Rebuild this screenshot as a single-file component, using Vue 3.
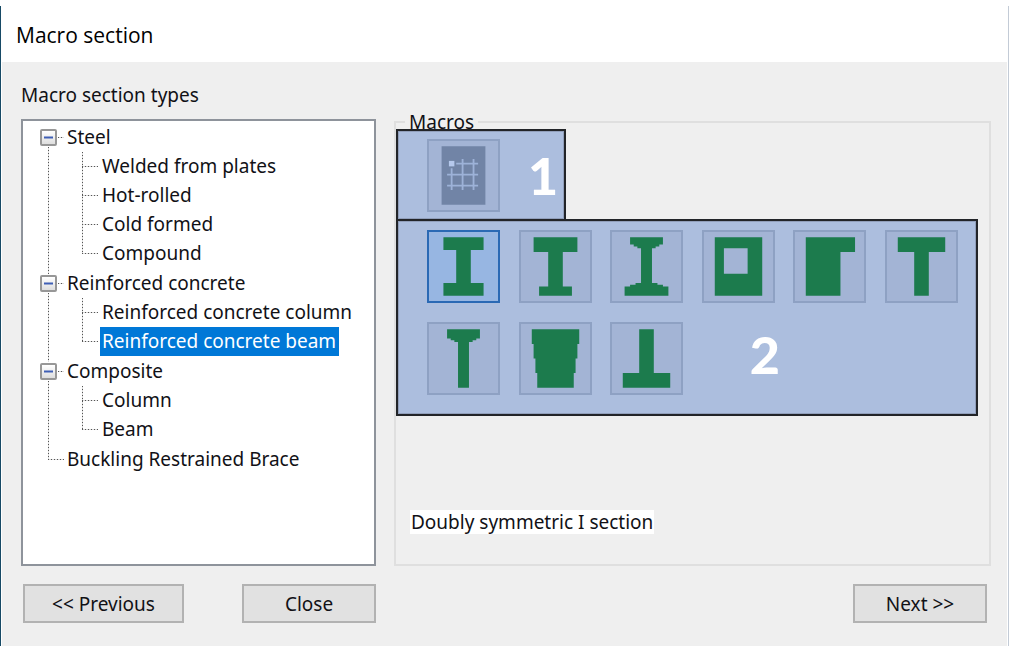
<script setup>
import { ref } from 'vue'

const groups = ref([
  { name: 'Steel', open: true, items: ['Welded from plates', 'Hot-rolled', 'Cold formed', 'Compound'] },
  { name: 'Reinforced concrete', open: true, items: ['Reinforced concrete column', 'Reinforced concrete beam'] },
  { name: 'Composite', open: true, items: ['Column', 'Beam'] },
  { name: 'Buckling Restrained Brace', open: false, items: [] },
])
const selectedType = ref('Reinforced concrete beam')

const macros = [
  { name: 'Doubly symmetric I section', d: 'M9 4H31V11H24V29H31V36H9V29H16V11H9Z' },
  { name: 'Asymmetric I section', d: 'M8 4H32V12H24V31H29V36H11V31H16V12H8Z' },
  { name: 'Tapered flange I section', d: 'M11 4H29V8H27V9H25V10H23V29H26V30H29V31H32V36H8V31H11V30H14V29H17V10H15V9H13V8H11Z' },
  { name: 'Hollow rectangular section', d: 'M7 4H33V36H7ZM12 10V24H25V10Z' },
  { name: 'L section', d: 'M7 4H34V12H26V36H7Z' },
  { name: 'T section', d: 'M7 4H33V12H24V36H16V12H7Z' },
  { name: 'Tapered flange T section', d: 'M11 4H29V9H27V10H25V11H23V36H17V11H15V10H13V9H11Z' },
  { name: 'Trapezoid section', d: 'M7 4H33V12H32V20H31V28H30V36H10V28H9V20H8V12H7Z' },
  { name: 'Inverted T section', d: 'M16 4H24V28H33V36H7V28H16Z' },
]
const selectedMacro = ref(macros[0].name)
</script>

<template>
  <div class="page">
    <main class="window">
      <header class="titlebar"><h1>Macro section</h1></header>
      <div class="body">
        <h2 id="types-label">Macro section types</h2>
        <div class="panels">
          <ul class="tree" role="tree" aria-labelledby="types-label">
            <li v-for="g in groups" :key="g.name" class="group" role="treeitem">
              <div class="row">
                <button v-if="g.items.length" type="button" class="expander" :aria-label="'Toggle ' + g.name" @click="g.open = !g.open">
                  <svg viewBox="0 0 13 13"><path d="M2 6.5H11" /><path v-if="!g.open" d="M6.5 2V11" /></svg>
                </button>
                <span v-else class="expander-gap"></span>
                <span class="label">{{ g.name }}</span>
              </div>
              <ul v-if="g.open" class="children" role="group">
                <li v-for="item in g.items" :key="item" class="child" role="treeitem" :aria-selected="item === selectedType">
                  <button type="button" class="label" :class="{ selected: item === selectedType }" @click="selectedType = item">{{ item }}</button>
                </li>
              </ul>
            </li>
          </ul>

          <section class="macros" aria-labelledby="macros-label">
            <h3 id="macros-label">Macros</h3>
            <div class="callout first">
              <button type="button" class="tile" aria-label="General section">
                <svg viewBox="0 0 40 40">
                  <path class="sheet" d="M8 4H32V36H8Z" />
                  <path class="mesh" d="M16 13.5H28M11 19.5H28M11 25.5H28M13.5 16V28M19.5 11V28M25.5 11V28" />
                  <path class="node" d="M12 12H15V15H12Z" />
                </svg>
              </button>
              <span class="digit">1</span>
            </div>
            <div class="callout second">
              <button
                v-for="m in macros"
                :key="m.name"
                type="button"
                class="tile"
                :class="{ active: m.name === selectedMacro }"
                :aria-label="m.name"
                @click="selectedMacro = m.name"
              >
                <svg viewBox="0 0 40 40"><path class="shape" fill-rule="evenodd" :d="m.d" /></svg>
              </button>
              <span class="digit">2</span>
            </div>
            <p class="description"><span>{{ selectedMacro }}</span></p>
          </section>
        </div>

        <footer class="actions">
          <button type="button" class="push wide">&lt;&lt; Previous</button>
          <button type="button" class="push close">Close</button>
          <button type="button" class="push next">Next &gt;&gt;</button>
        </footer>
      </div>
    </main>
  </div>
</template>

<style>
body {
  margin: 0;
  background: #fff;
}
</style>

<style scoped>
* {
  box-sizing: border-box;
}
button {
  font: inherit;
  color: inherit;
  margin: 0;
}
ul {
  list-style: none;
  margin: 0;
  padding: 0;
}
.page {
  min-height: 100vh;
  padding: 6px 0 2px;
  display: flex;
  flex-direction: column;
  font-family: "Noto Sans", "Open Sans", sans-serif;
  font-size: 19px;
  color: #111116;
}
.window {
  flex: 1;
  display: flex;
  flex-direction: column;
  border-left: 1px solid #174a66;
  border-right: 1px solid #c3cbd6;
}
.titlebar {
  height: 56px;
  padding: 2px 15px 0;
  display: flex;
  align-items: center;
}
h1 {
  margin: 0;
  font-family: "Open Sans", "Noto Sans", sans-serif;
  font-size: 21px;
  font-weight: 400;
  color: #000;
}
.body {
  flex: 1;
  display: flex;
  flex-direction: column;
  margin: 0 1px;
  padding: 20px 16px 23px 19px;
  background: #efefef;
}
h2 {
  margin: 0;
  height: 37px;
  font-size: 19px;
  line-height: 26px;
  font-weight: 400;
}
.panels {
  flex: 1;
  display: grid;
  grid-template-columns: 355px 1fr;
  gap: 18px;
}
.tree {
  padding: 2px 0 0 16px;
  background: #fff;
  border: 2px solid #8e939b;
}
.group {
  position: relative;
  margin-bottom: 1px;
}
.group::before,
.children::before {
  content: "";
  position: absolute;
  width: 1px;
  background: repeating-linear-gradient(to bottom, #555 0 1px, #ddd 1px 3px);
}
.group::before {
  left: 9px;
  top: 24px;
  bottom: -6px;
}
.group:last-child::before {
  top: 5px;
  bottom: auto;
  height: 10px;
}
.row {
  display: flex;
  align-items: center;
  height: 29px;
}
.row::before {
  content: "";
  position: absolute;
  left: 19px;
  width: 6px;
  height: 1px;
  background: repeating-linear-gradient(to right, #555 0 1px, #ddd 1px 3px);
}
.group:last-child .row::before {
  left: 9px;
  width: 16px;
}
.expander,
.expander-gap {
  width: 17px;
  height: 17px;
  margin: 0 8px 0 1px;
}
.expander {
  position: relative;
  padding: 0;
  border: 2px solid #979797;
  border-radius: 2px;
  background: linear-gradient(#fff, #dedede);
  display: flex;
}
.expander svg {
  width: 100%;
  height: 100%;
}
.expander path {
  stroke: #3f5fb5;
  stroke-width: 2;
}
.label {
  display: block;
  height: 29px;
  padding: 0 3px 0 2px;
  border: 0;
  background: none;
  line-height: 29px;
  white-space: nowrap;
}
.label.selected {
  background: #0078d7;
  color: #fff;
}
.children {
  position: relative;
  padding-left: 61px;
}
.children::before {
  left: 43px;
  top: 0;
  bottom: 14px;
}
.child {
  position: relative;
}
.child::before {
  content: "";
  position: absolute;
  left: -18px;
  top: 14px;
  width: 16px;
  height: 1px;
  background: repeating-linear-gradient(to right, #555 0 1px, #ddd 1px 3px);
}
.macros {
  margin-top: 2px;
  border: 2px solid #dfdfdf;
  display: flex;
  flex-direction: column;
  align-items: flex-start;
}
h3 {
  margin: -14px 0 -6px 9px;
  padding: 0 4px;
  font-size: 19px;
  line-height: 26px;
  font-weight: 400;
  background: #efefef;
}
.callout {
  position: relative;
  border: 2px solid #222428;
  background: #acbede;
  box-shadow: inset 0 0 0 1px #919fbb;
}
.first {
  display: flex;
  align-items: center;
  width: 170px;
  height: 92px;
  padding-left: 29px;
}
.second {
  align-self: stretch;
  margin: -2px 11px 0 0;
  padding: 9px 18px 19px 29px;
  display: grid;
  grid-template-columns: repeat(6, 73px);
  justify-content: space-between;
  row-gap: 19px;
}
.tile {
  width: 73px;
  height: 73px;
  padding: 0;
  border: 2px solid #8ea1c3;
  background: #a3b4d5;
}
.tile.active {
  border-color: #2a69b4;
  background: #97b6e2;
}
.tile svg {
  display: block;
  width: 73px;
  height: 73px;
  margin: -2px;
}
.shape {
  fill: #1c7b4d;
}
.sheet {
  fill: #7184a6;
}
.mesh {
  stroke: #9db2d8;
  stroke-width: 1;
}
.node {
  fill: #b5c8ec;
}
.digit {
  font-family: Lato, "Open Sans", sans-serif;
  font-size: 52px;
  line-height: 65px;
  font-weight: 900;
  color: #fff;
}
.first .digit {
  margin-left: 28px;
}
.second .digit {
  grid-column: 4 / 6;
  margin-left: 48px;
}
.description {
  margin: 94px 0 0 14px;
  line-height: 26px;
}
.description span {
  display: block;
  padding: 0 1px;
  line-height: 24px;
  background: #fff;
}
.actions {
  display: flex;
  margin-top: 18px;
  padding: 0 4px 0 2px;
}
.push {
  width: 134px;
  height: 39px;
  padding: 0;
  border: 2px solid #b2b2b2;
  background: #e1e1e1;
}
.push.wide {
  width: 161px;
}
.push.close {
  margin-left: 58px;
}
.push.next {
  margin-left: auto;
}
</style>
